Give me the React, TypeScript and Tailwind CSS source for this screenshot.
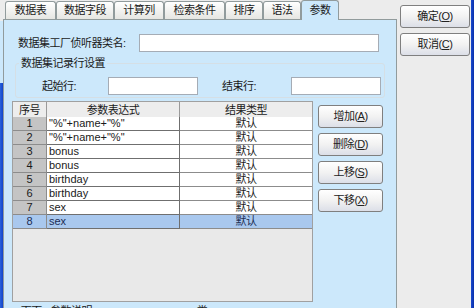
import React from "react";

const tabs = [
  { label: "数据表", w: "w-[51px]" },
  { label: "数据字段", w: "w-[58px]" },
  { label: "计算列", w: "w-[50px]" },
  { label: "检索条件", w: "w-[61px]" },
  { label: "排序", w: "w-[38px]" },
  { label: "语法", w: "w-[38px]" },
  { label: "参数", w: "w-[38px]", active: true },
];

const rows = [
  { no: 1, expr: '"%"+name+"%"', type: "默认" },
  { no: 2, expr: '"%"+name+"%"', type: "默认" },
  { no: 3, expr: "bonus", type: "默认" },
  { no: 4, expr: "bonus", type: "默认" },
  { no: 5, expr: "birthday", type: "默认" },
  { no: 6, expr: "birthday", type: "默认" },
  { no: 7, expr: "sex", type: "默认" },
  { no: 8, expr: "sex", type: "默认", selected: true },
];

const Btn = ({ label, hot, w }: { label: string; hot: string; w: string }) => (
  <button
    type="button"
    className={`${w} h-[23px] rounded-[3px] border border-[#7f7f7f] bg-gradient-to-b from-white via-[#f2f2f2] to-[#dcdfe8] text-[11px] tracking-[-0.5px] text-[#222] flex items-center justify-center`}
  >
    {label}(<u>{hot}</u>)
  </button>
);

export default function App() {
  return (
    <div
      className="w-[474px] h-[308px] flex overflow-hidden bg-[#ececec] text-[#1a1a1a]"
      style={{ fontFamily: '"Liberation Sans", "Noto Sans CJK SC", sans-serif' }}
    >
      {/* left window edge */}
      <div className="w-[3px] flex flex-col">
        <div className="h-[21px] bg-[#ececec]" />
        <div className="h-[62px] bg-[#cce8fb]" />
        <div className="flex-1 bg-gradient-to-r from-[#2a62dc] to-[#1244c8]" />
      </div>

      {/* tabbed panel */}
      <div className="w-[394px] flex flex-col">
        <div className="h-[21px] flex items-end pl-[2px]">
          {tabs.map((t) =>
            t.active ? (
              <div
                key={t.label}
                className={`${t.w} h-[20px] -mb-px relative z-10 bg-[#cce8fb] border border-b-0 border-[#919b9c] rounded-t-[3px] flex items-center justify-center text-[11px] tracking-[-0.5px]`}
              >
                {t.label}
              </div>
            ) : (
              <div
                key={t.label}
                className={`${t.w} h-[18px] bg-gradient-to-b from-white to-[#e6e6e2] border border-b-0 border-[#919b9c] rounded-t-[3px] flex items-center justify-center text-[11px] tracking-[-0.5px]`}
              >
                {t.label}
              </div>
            )
          )}
        </div>

        <div className="flex-1 bg-[#cce8fb] border border-[#919b9c] flex flex-col">
          {/* class name row */}
          <div className="mt-[14px] ml-[14px] flex items-center">
            <span className="w-[121px] text-[11px] tracking-[-0.5px]">数据集工厂侦听器类名:</span>
            <div className="w-[240px] h-[18px] bg-white border border-[#a5acb5]" />
          </div>

          {/* record row group */}
          <fieldset className="mt-[4px] ml-[11px] w-[370px] border border-[#d5dfe5] rounded-[3px] pb-[2px]">
            <legend className="ml-[3px] px-[2px] text-[11px] tracking-[-0.5px] leading-[14px]">
              数据集记录行设置
            </legend>
            <div className="mt-[7px] pl-[26px] flex items-center">
              <span className="w-[66px] text-[11px] tracking-[-0.5px]">起始行:</span>
              <div className="w-[90px] h-[18px] bg-white border border-[#a5acb5]" />
              <span className="ml-[24px] w-[69px] text-[11px] tracking-[-0.5px]">结束行:</span>
              <div className="w-[90px] h-[18px] bg-white border border-[#a5acb5]" />
            </div>
          </fieldset>

          {/* table + buttons */}
          <div className="mt-[3px] ml-[8px] flex items-start">
            <div className="w-[301px] h-[201px] border border-[#a0a0a0] bg-[#e9e9e9] flex flex-col text-[11px]">
              <div className="grid grid-cols-[34px_133px_1fr] h-[15px] bg-[#ededed]">
                <div className="border-r border-b border-[#9a9a9a] flex items-center justify-center tracking-[-0.5px]">序号</div>
                <div className="border-r border-b border-[#9a9a9a] flex items-center justify-center tracking-[-0.5px]">参数表达式</div>
                <div className="border-b border-[#9a9a9a] flex items-center justify-center tracking-[-0.5px]">结果类型</div>
              </div>
              {rows.map((r) => (
                <div
                  key={r.no}
                  className={`grid grid-cols-[34px_133px_1fr] h-[14px] leading-[13px] ${
                    r.selected ? "bg-[#a9c8ee] text-[#1b2d55]" : "bg-white"
                  }`}
                >
                  <div
                    className={`border-r border-b border-[#8c8c8c] text-center ${
                      r.selected ? "bg-[#a9c8ee]" : "bg-[#c4c4c4]"
                    }`}
                  >
                    {r.no}
                  </div>
                  <div className="border-r border-b border-[#6f6f6f] pl-[2px]">{r.expr}</div>
                  <div className="border-b border-[#8c8c8c] text-center tracking-[-0.5px]">{r.type}</div>
                </div>
              ))}
            </div>

            <div className="ml-[5px] mt-[4px] flex flex-col gap-[5px]">
              <Btn label="增加" hot="A" w="w-[65px]" />
              <Btn label="删除" hot="D" w="w-[65px]" />
              <Btn label="上移" hot="S" w="w-[65px]" />
              <Btn label="下移" hot="X" w="w-[65px]" />
            </div>
          </div>

          <div className="mt-[2px] ml-[8px] flex gap-[16px] text-[11px] tracking-[-0.5px] leading-[14px]">
            <span>■ 下面 · 参数说明</span>
            <span className="ml-[80px]">■ 类</span>
          </div>
        </div>
      </div>

      {/* right button column */}
      <div className="w-[74px] pt-[5px] pl-[3px] flex flex-col gap-[5px]">
        <Btn label="确定" hot="O" w="w-[70px]" />
        <Btn label="取消" hot="C" w="w-[70px]" />
      </div>

      {/* right window edge */}
      <div className="w-[3px] bg-gradient-to-r from-[#1a4ad0] to-[#0a2fa8]" />
    </div>
  );
}
